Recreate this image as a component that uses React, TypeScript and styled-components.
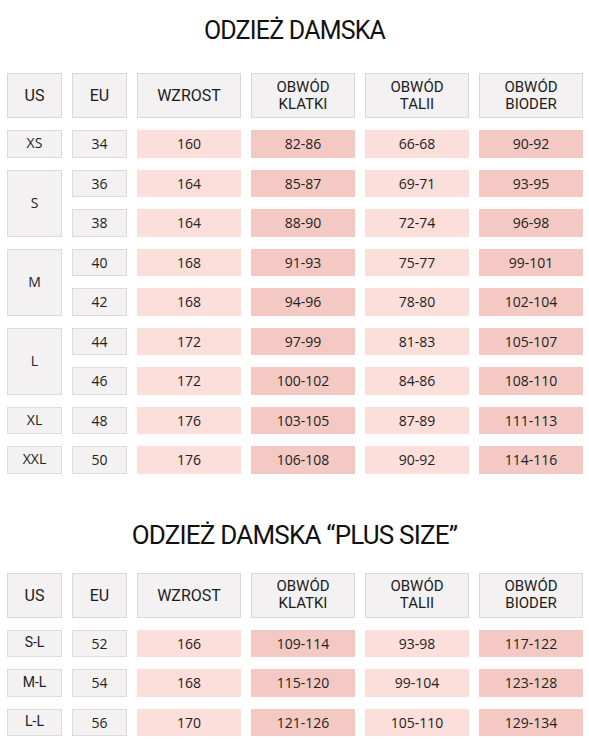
import React from 'react'
import styled, { createGlobalStyle } from 'styled-components'

type Tone = 'head' | 'label' | 'light' | 'dark'

interface SizeGroup {
  us: string
  rows: Array<[string, string, string, string, string]>
}

const womenSizes: SizeGroup[] = [
  { us: 'XS', rows: [['34', '160', '82-86', '66-68', '90-92']] },
  { us: 'S', rows: [['36', '164', '85-87', '69-71', '93-95'], ['38', '164', '88-90', '72-74', '96-98']] },
  { us: 'M', rows: [['40', '168', '91-93', '75-77', '99-101'], ['42', '168', '94-96', '78-80', '102-104']] },
  { us: 'L', rows: [['44', '172', '97-99', '81-83', '105-107'], ['46', '172', '100-102', '84-86', '108-110']] },
  { us: 'XL', rows: [['48', '176', '103-105', '87-89', '111-113']] },
  { us: 'XXL', rows: [['50', '176', '106-108', '90-92', '114-116']] },
]

const plusSizes: SizeGroup[] = [
  { us: 'S-L', rows: [['52', '166', '109-114', '93-98', '117-122']] },
  { us: 'M-L', rows: [['54', '168', '115-120', '99-104', '123-128']] },
  { us: 'L-L', rows: [['56', '170', '121-126', '105-110', '129-134']] },
]

const GlobalStyle = createGlobalStyle`
  html, body {
    margin: 0;
    padding: 0;
    background: #ffffff;
  }
  body {
    font-family: 'Open Sans', 'Liberation Sans', sans-serif;
    color: #222;
  }
`

const tones: Record<Tone, { bg: string; border: string }> = {
  head: { bg: '#f3f1f1', border: '#d9d8d8' },
  label: { bg: '#f3f1f1', border: '#dcdbdb' },
  light: { bg: '#fcdeda', border: '#fcdeda' },
  dark: { bg: '#f4c9c3', border: '#f4c9c3' },
}

const SizeTable = ({ groups, roboLabels }: { groups: SizeGroup[]; roboLabels?: boolean }) => {
  const rowCount = groups.reduce((n, g) => n + g.rows.length, 0)
  return (
    <S.Grid $rows={rowCount}>
      <S.Cell $tone="head"><S.HeadText>US</S.HeadText></S.Cell>
      <S.Cell $tone="head"><S.HeadText>EU</S.HeadText></S.Cell>
      <S.Cell $tone="head"><S.HeadText>WZROST</S.HeadText></S.Cell>
      <S.Cell $tone="head"><S.HeadText $double>OBWÓD<br />KLATKI</S.HeadText></S.Cell>
      <S.Cell $tone="head"><S.HeadText $double>OBWÓD<br />TALII</S.HeadText></S.Cell>
      <S.Cell $tone="head"><S.HeadText $double>OBWÓD<br />BIODER</S.HeadText></S.Cell>
      {groups.map(group =>
        group.rows.map((row, i) => (
          <React.Fragment key={group.us + row[0]}>
            {i === 0 && (
              <S.Cell $tone="label" $span={group.rows.length}>
                <S.UsText $robo={roboLabels}>{group.us}</S.UsText>
              </S.Cell>
            )}
            <S.Cell $tone="label"><S.Value>{row[0]}</S.Value></S.Cell>
            <S.Cell $tone="light"><S.Value>{row[1]}</S.Value></S.Cell>
            <S.Cell $tone="dark"><S.Value>{row[2]}</S.Value></S.Cell>
            <S.Cell $tone="light"><S.Value>{row[3]}</S.Value></S.Cell>
            <S.Cell $tone="dark"><S.Value>{row[4]}</S.Value></S.Cell>
          </React.Fragment>
        ))
      )}
    </S.Grid>
  )
}

export default function App() {
  return (
    <S.Page>
      <GlobalStyle />
      <S.Title>ODZIEŻ DAMSKA</S.Title>
      <SizeTable groups={womenSizes} />
      <S.Title $second>ODZIEŻ DAMSKA “PLUS SIZE”</S.Title>
      <SizeTable groups={plusSizes} roboLabels />
    </S.Page>
  )
}

export const S = {
  Page: styled.div`
    width: 589px;
    height: 750px;
    overflow: hidden;
    box-sizing: border-box;
    padding: 11px 0 0 7px;
  `,
  Title: styled.h1<{ $second?: boolean }>`
    margin: ${p => (p.$second ? '41px 0 18px' : '0 0 22px')};
    height: 40px;
    line-height: 40px;
    text-align: center;
    padding-right: 7px;
    font-family: Roboto, 'Liberation Sans', sans-serif;
    font-weight: 400;
    font-size: ${p => (p.$second ? '26px' : '25px')};
    letter-spacing: -0.8px;
    color: #111;
  `,
  Grid: styled.div<{ $rows: number }>`
    display: grid;
    grid-template-columns: 55px 55px 104px 104px 104px 104px;
    grid-template-rows: 45px repeat(${p => p.$rows}, 27.5px);
    column-gap: 10px;
    row-gap: 12px;
  `,
  Cell: styled.div<{ $tone: Tone; $span?: number }>`
    box-sizing: border-box;
    display: flex;
    align-items: center;
    justify-content: center;
    background: ${p => tones[p.$tone].bg};
    border: 1px solid ${p => tones[p.$tone].border};
    ${p => (p.$span ? `grid-row: span ${p.$span};` : '')}
  `,
  HeadText: styled.span<{ $double?: boolean }>`
    font-family: Roboto, 'Liberation Sans', sans-serif;
    font-size: ${p => (p.$double ? '15px' : '16px')};
    line-height: 17px;
    text-align: center;
    color: #1c1c1c;
  `,
  UsText: styled.span<{ $robo?: boolean }>`
    font-family: ${p => (p.$robo ? "Roboto, 'Liberation Sans', sans-serif" : "'Open Sans', 'Liberation Sans', sans-serif")};
    font-size: 14px;
    color: #222;
    margin-top: -2px;
  `,
  Value: styled.span`
    font-family: 'Open Sans', 'Liberation Sans', sans-serif;
    font-size: 14px;
    color: #222;
  `,
}
